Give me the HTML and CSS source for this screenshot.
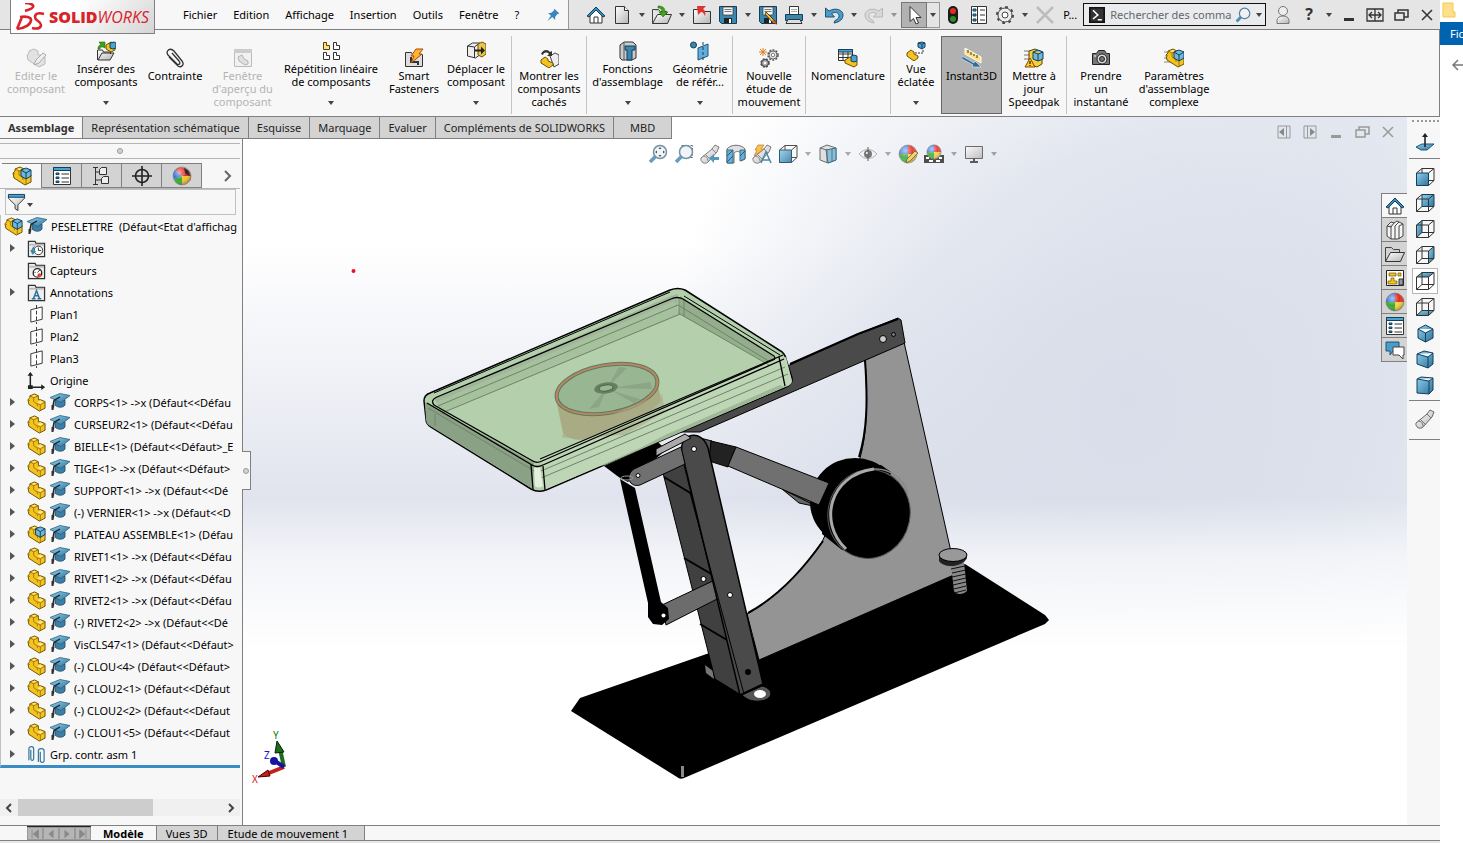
FILE: index.html
```html
<!DOCTYPE html>
<html lang="fr">
<head>
    <meta charset="UTF-8">
    <title>SOLIDWORKS - PESELETTRE</title>
    <link rel="stylesheet" href="styles.css">
</head>
<body>
    <!-- icon set, 20x20 grid -->
    <svg class="sprite" aria-hidden="true">
        <defs>
            <linearGradient id="gBlue" x1="0" y1="0" x2="1" y2="1"><stop offset="0" stop-color="#8fd0ee"/><stop offset="1" stop-color="#2f7299"/></linearGradient>
            <linearGradient id="gGrey" x1="0" y1="0" x2="1" y2="1"><stop offset="0" stop-color="#ffffff"/><stop offset="1" stop-color="#b5b5b5"/></linearGradient>
            <radialGradient id="gShade" cx=".35" cy=".3" r=".8"><stop offset="0" stop-color="#fff" stop-opacity=".6"/><stop offset=".5" stop-color="#fff" stop-opacity="0"/><stop offset="1" stop-color="#000" stop-opacity=".5"/></radialGradient>
        </defs>
        <symbol id="caret" viewBox="0 0 8 8"><path d="M1 2h6L4 6z" fill="#444"/></symbol>
        <symbol id="pin" viewBox="0 0 20 20"><path d="M12 1l7 7-3 1-3 4 0 4-4-4-7 6 5-8-4-4 4 0 4-3z" fill="#3a86bd"/></symbol>
        <symbol id="home" viewBox="0 0 20 20"><path d="M4 9v9h12V9l-6-5z" fill="#fff" stroke="#333"/><path d="M1 11l9-9 9 9-2 1-7-7-7 7z" fill="#3c8ab5" stroke="#123f5c"/><path d="M8 18v-6h4v6" fill="none" stroke="#333"/></symbol>
        <symbol id="new" viewBox="0 0 20 20"><path d="M3.500 1.500h9l4 4v13h-13z" fill="url(#gGrey)" stroke="#333"/><path d="M12.500 1.500v4h4" fill="#fff" stroke="#333"/></symbol>
        <symbol id="folder" viewBox="0 0 20 20"><path d="M.5 3.500h6l2 2h6v4M.5 3.500v14" fill="#ccc" stroke="#444"/><path d="M.5 17.500l5-9h14l-4 9z" fill="url(#gGrey)" stroke="#333"/></symbol>
        <symbol id="open" viewBox="0 0 20 20"><path d="M.5 4.500h6l2 2h6v4M.5 4.500v14" fill="#ccc" stroke="#444"/><path d="M.5 18.500l5-9h14l-4 9z" fill="url(#gGrey)" stroke="#333"/><path d="M6 1c5 0 7 2 7 6h3l-5 5-4-5h3c0-3-1-4-4-4z" fill="#41a31c" stroke="#256b0b" stroke-width=".6"/></symbol>
        <symbol id="publish" viewBox="0 0 20 20"><path d="M1.500 18.500v-14h6l1 2h10v12z" fill="url(#gGrey)" stroke="#333"/><path d="M5 1h9l-3 3c2 1 3 4 2 7-1-2-2-4-4-4l-3 3z" fill="#e0322f"/></symbol>
        <symbol id="save" viewBox="0 0 20 20"><path d="M1.500 1.500h17v17h-15l-2-2z" fill="#3a86ad" stroke="#153f58"/><path d="M5 2h10v8H5z" fill="#f4f4f4" stroke="#333" stroke-width=".7"/><path d="M6.500 4.500h7M6.500 6.500h7" stroke="#777"/><path d="M6 18v-5h8v5z" fill="#222"/><path d="M11 14h2v4h-2z" fill="#fff"/></symbol>
        <symbol id="saveas" viewBox="0 0 20 20"><use href="#save"/><path d="M8 7l9 9 2 3-4-1-8-9z" fill="#f2c230" stroke="#222" stroke-width=".8"/><path d="M15 14l4 5-5-2z" fill="#d9512c"/></symbol>
        <symbol id="print" viewBox="0 0 20 20"><path d="M5.500 9V1.500h9V9" fill="#fff" stroke="#333"/><path d="M1.500 9.500h17v6h-17z" fill="#3a86ad" stroke="#153f58"/><path d="M4 14.500h12l2 4H2z" fill="#ddd" stroke="#333"/><path d="M7 4.500h6M7 6.500h6" stroke="#aaa"/></symbol>
        <symbol id="undo" viewBox="0 0 20 20"><path d="M1.500 3v9h9L7.500 8.500c4-2 7-1 7.500 2 .4 2-1 4-4 5l-1 2.500c6-1 9-4 9-8 0-5-7-8-14-4z" fill="#4b9cc8" stroke="#1c5577"/></symbol>
        <symbol id="redo" viewBox="0 0 20 20"><path d="M18.500 3v9h-9L12.500 8.500c-4-2-7-1-7.500 2-.4 2 1 4 4 5l1 2.500c-6-1-9-4-9-8 0-5 7-8 14-4z" fill="#d8d8d8" stroke="#b8b8b8"/></symbol>
        <symbol id="cursor" viewBox="0 0 20 20"><path d="M6 1.500v15l3.500-3 2.500 5.500 2.500-1-2.500-5.500h5z" fill="#fff" stroke="#333"/></symbol>
        <symbol id="traffic" viewBox="0 0 20 20"><rect x="5" y="1" width="10" height="18" rx="5" fill="#1b1b1b"/><circle cx="10" cy="6" r="3" fill="#e32d1c"/><circle cx="10" cy="14" r="3" fill="#2b8c2b"/></symbol>
        <symbol id="list" viewBox="0 0 20 20"><path d="M2.500 1.500h15v17h-15z" fill="#fff" stroke="#333"/><path d="M8.500 2v16" stroke="#333"/><path d="M4 4h3v2H4zM4 9h3v2H4zM4 14h3v2H4z" fill="#3a9bc9" stroke="#153f58"/><path d="M11 5h5M11 10h5M11 15h5" stroke="#333"/></symbol>
        <symbol id="gear" viewBox="0 0 20 20"><circle cx="10" cy="10" r="8" fill="none" stroke="#444" stroke-width="2" stroke-dasharray="2.700 3.583"/><circle cx="10" cy="10" r="7" fill="#eee" stroke="#444"/><circle cx="10" cy="10" r="3" fill="#fff" stroke="#444"/></symbol>
        <symbol id="cross" viewBox="0 0 20 20"><path d="M2 2l16 16M18 2L2 18" stroke="#bdbdbd" stroke-width="2.500"/></symbol>
        <symbol id="prompt" viewBox="0 0 20 20"><path d="M1 1h18v18H1z" fill="#333" stroke="#111" stroke-width="2"/><path d="M5 4l6 6-6 5M11 16h5" fill="none" stroke="#fff" stroke-width="2"/></symbol>
        <symbol id="lens" viewBox="0 0 20 20"><path d="M2 18l6-6" stroke="#4a8db8" stroke-width="3.500"/><circle cx="12" cy="8" r="6.500" fill="#eef3f6" stroke="#5b7f96" stroke-width="1.500"/></symbol>
        <symbol id="user" viewBox="0 0 20 20"><circle cx="10" cy="6" r="4.500" fill="#eee" stroke="#777"/><path d="M4 18.500v-3c0-6 12-6 12 0v3z" fill="url(#gGrey)" stroke="#777"/></symbol>
        <symbol id="min" viewBox="0 0 20 20"><path d="M5 13h10v3H5z" fill="currentColor"/></symbol>
        <symbol id="fit" viewBox="0 0 20 20"><path d="M2 4h16v12H2zM10 4v12M4 10h12M7 7l-3 3 3 3M13 7l3 3-3 3" fill="none" stroke="currentColor" stroke-width="1.300"/></symbol>
        <symbol id="restore" viewBox="0 0 20 20"><path d="M4 8h9v7H4zM7 8V5h10v7h-4" fill="none" stroke="currentColor" stroke-width="1.500"/></symbol>
        <symbol id="close" viewBox="0 0 20 20"><path d="M5 5l10 10M15 5L5 15" stroke="currentColor" stroke-width="1.500"/></symbol>
        <symbol id="paneL" viewBox="0 0 20 20"><path d="M4 4h12v12H4zM12.500 4v12" fill="none" stroke="#999"/><path d="M10 6v8l-5-4z" fill="#888"/></symbol>
        <symbol id="paneR" viewBox="0 0 20 20"><path d="M4 4h12v12H4zM7.500 4v12" fill="none" stroke="#999"/><path d="M10 6v8l5-4z" fill="#888"/></symbol>

        <symbol id="part" viewBox="0 0 20 20"><path d="M1 7l2-2V3l5-2 4 2v4l2 0 5 2v7l-6 3L2 12z" fill="#f5c31f" stroke="#6f5200"/><path d="M3 3l4 2 5-2M7 5v4l4 3 0 2M1 7l2 1M11 11l3 1.500 5-3M14 12.500V19" fill="none" stroke="#8a6800" stroke-width=".8"/><path d="M5 3l3-1 2 1-3 1zM11 10l3-2 3 1.500-3 2z" fill="#ffe88c"/></symbol>
        <symbol id="asm" viewBox="0 0 20 20"><use href="#part"/><path d="M9 4l5-2 5 2v6l-5 3-5-3z" fill="#6fb8dc" stroke="#123f5c"/><path d="M9 4l5 3 5-3M14 7v6" fill="none" stroke="#123f5c"/></symbol>
        <symbol id="cap" viewBox="0 0 20 20"><path d="M5 8v5c3 3 8 3 10 0V8z" fill="#3d7ea5" stroke="#1c4a66" stroke-width=".8"/><path d="M0 5.500l10-4 10 2-9 7z" fill="url(#gBlue)" stroke="#2a6284" stroke-width=".8"/><path d="M10 5L4 8.500 2.500 16" fill="none" stroke="#222" stroke-width="1.400"/><path d="M1.500 13h3l-1 5h-2z" fill="#333"/></symbol>
        <symbol id="fold" viewBox="0 0 20 20"><path d="M1.500 18.500v-16h7l1 2h9v14z" fill="#eee" stroke="#333" stroke-width="1.300"/><path d="M2 5h16v2H2z" fill="#bbb"/></symbol>
        <symbol id="history" viewBox="0 0 20 20"><use href="#fold"/><circle cx="12" cy="12" r="4.500" fill="#fff" stroke="#333"/><path d="M12 9v3h3" fill="none" stroke="#333"/><path d="M8 8c-3 1-3 4-2 7M4 12l2 4 3-3z" fill="#3a86ad" stroke="#3a86ad"/></symbol>
        <symbol id="sensor" viewBox="0 0 20 20"><use href="#fold"/><circle cx="11" cy="12.500" r="4.500" fill="#fff" stroke="#222" stroke-width="1.400"/><path d="M11 12l3-3M8 12h1" stroke="#222"/><circle cx="13" cy="15" r="2" fill="#e0452c"/></symbol>
        <symbol id="annot" viewBox="0 0 20 20"><use href="#fold"/><path d="M5 16.500h4M11 16.500h4M7 16l3-8 3 8M8 13.500h4" fill="none" stroke="#28729b" stroke-width="1.600"/></symbol>
        <symbol id="plane" viewBox="0 0 20 20"><path d="M4 5l12-3v13L4 18z" fill="#fff" stroke="#333"/><path d="M10 0v20" stroke="#333" stroke-dasharray="4 2"/></symbol>
        <symbol id="origin" viewBox="0 0 20 20"><path d="M3.500 2v15H18" fill="none" stroke="#222" stroke-width="1.600"/><path d="M.5 5l3-4 3 4zM15 14l4 3-4 3zM1 15h5v4H1z" fill="#222"/></symbol>
        <symbol id="mates" viewBox="0 0 20 20"><path d="M2 16V4c0-3 5-3 5 0v10c0 3-3 3-3 0V5M12 18V6c0-3 6-3 6 0v10c0 3-4 3-4 0V7" fill="none" stroke="#39799b" stroke-width="1.300"/></symbol>
        <symbol id="props" viewBox="0 0 20 20"><path d="M1.500 1.500h17v17h-17z" fill="#fff" stroke="#333"/><path d="M1.500 1.500h17v3h-17z" fill="#4ba3cf" stroke="#153f58"/><path d="M4 7h3v1.500H4zM4 11h3v1.500H4zM4 15h3v1.500H4z" fill="#4ba3cf" stroke="#153f58"/><path d="M9.500 8H17M9.500 12H17M9.500 16H17" stroke="#333"/></symbol>
        <symbol id="config" viewBox="0 0 20 20"><path d="M3.500 1v18M1 1.500h5M1 18.500h5M4 6h5M4 14h5" stroke="#333" fill="none"/><path d="M7.500 3.500l2-2h5v7h-7zM9.500 12.500l2-2h5v7h-7z" fill="#eee" stroke="#333"/></symbol>
        <symbol id="target" viewBox="0 0 20 20"><circle cx="10" cy="10" r="6.500" fill="none" stroke="#222" stroke-width="1.600"/><path d="M10 0v20M0 10h20" stroke="#222" stroke-width="1.600"/></symbol>
        <symbol id="ball" viewBox="0 0 20 20"><path d="M10 10V1a9 9 0 0 1 9 9z" fill="#e22b22"/><path d="M10 10h9a9 9 0 0 1-9 9z" fill="#f4d23a"/><path d="M10 10v9a9 9 0 0 1-9-9z" fill="#35a835"/><path d="M10 10H1a9 9 0 0 1 9-9z" fill="#2f6fd6"/><circle cx="10" cy="10" r="9" fill="url(#gShade)" stroke="#777" stroke-width=".6"/></symbol>
        <symbol id="display" viewBox="0 0 20 20"><path d="M10 10L3 4a9 9 0 0 1 13 0z" fill="#e22b22"/><path d="M10 10l6-6a9 9 0 0 1 2 11z" fill="#e22b22"/><path d="M12 2l5 3 1 6-5-4z" fill="#222"/><path d="M10 10l9 0a9 9 0 0 1-9 9z" fill="#f4c22a"/><path d="M10 10v9a9 9 0 0 1-8-6z" fill="#35a835"/><path d="M10 10l-8 3a9 9 0 0 1 1-9z" fill="#2f6fd6"/><circle cx="10" cy="10" r="9" fill="url(#gShade)" stroke="#777" stroke-width=".6"/></symbol>
        <symbol id="filter" viewBox="0 0 20 20"><path d="M1.500 3.500h17v2l-7 7v6l-3-2v-4l-7-7z" fill="url(#gGrey)" stroke="#333"/><path d="M1.500 1.500h17v3h-17z" fill="#4ba3cf" stroke="#153f58"/></symbol>

        <symbol id="edit" viewBox="0 0 20 20"><path d="M1 7l2-2V3l5-2 4 2v4l2 0 5 2v7l-6 3L2 12z" fill="#e2e2e2" stroke="#bbb"/><path d="M8 17l2-5 7-7 3 2-7 8z" fill="#eee" stroke="#aaa"/></symbol>
        <symbol id="insert" viewBox="0 0 20 20"><path d="M1.500 19V9h5l1 2h7v2M2 19l4-7h12l-4 7z" fill="url(#gGrey)" stroke="#333"/><path d="M2 8c0-3 1-4 3-4L3 1h6v6L7 6C5 6 4 6 4 8z" fill="#3ca01b" stroke="#256b0b" stroke-width=".6"/><path d="M10 4l5-3 4 2v6l-4 2-5-3z" fill="#f5c31f" stroke="#6f5200"/><path d="M14 2l4-1 2 1v5l-3 1-3-1z" fill="#4ba3cf" stroke="#123f5c"/></symbol>
        <symbol id="clip" viewBox="0 0 20 20"><path d="M4 9l9 9c3 2 7-1 4-5L9 3C5-1 0 3 3 7l9 9c2 1 4 0 2-3L7 5" fill="none" stroke="#333" stroke-width="1.300"/></symbol>
        <symbol id="preview" viewBox="0 0 20 20"><path d="M1.500 1.500h17v17h-17z" fill="#f1f1f1" stroke="#bbb"/><path d="M1 1h18v4H1z" fill="#ccc"/><path d="M5 9l4-2 2 4 4 2v3l-3 1-6-4z" fill="#e0e0e0" stroke="#b5b5b5"/></symbol>
        <symbol id="pattern" viewBox="0 0 20 20"><path d="M2.500 1.500h3v3h3v4h-6z" fill="#ffe27a" stroke="#5a4300"/><path d="M12.500 1.500h3v3h3v4h-6zM2.500 11.500h3v3h3v4h-6zM12.500 11.500h3v3h3v4h-6z" fill="#fff" stroke="#333"/></symbol>
        <symbol id="smart" viewBox="0 0 20 20"><path d="M1.500 18.500v-14h6l1 2h10v12z" fill="#ddd" stroke="#333"/><path d="M7 9v5h7v3" fill="none" stroke="#333" stroke-width="2"/><path d="M12 1h7l-4 5h3L7 15l3-7H7z" fill="#ffb52e" stroke="#a8480c"/></symbol>
        <symbol id="move" viewBox="0 0 20 20"><path d="M1.500 5l5-3h7v12l-4 3-8-2z" fill="#eee" stroke="#333"/><path d="M1.500 5l7 1 5-4M8.500 6v11" fill="none" stroke="#333"/><path d="M12 3l4-2 4 2v10l-4 3-4-2z" fill="#e9c54a" stroke="#6f5200"/><path d="M9 8.500h6V5.500l4 4-4 4v-3H9z" fill="#222"/></symbol>
        <symbol id="showhid" viewBox="0 0 20 20"><path d="M11 8l5-3 4 2v9l-5 3z" fill="#eee" stroke="#444"/><path d="M2 12l4-3 3 2v2l5 2v2l-4 3-8-5z" fill="#f5c31f" stroke="#6f5200"/><path d="M2 6c2-5 7-5 9-2l2-1v5H8l2-2C8 4 5 4 4 7z" fill="#333"/></symbol>
        <symbol id="feat" viewBox="0 0 20 20"><path d="M2 4l4-3h9l3 3v13l-4 2H4l-2-2z" fill="#ccc" stroke="#333"/><path d="M7 5h10v4h-3v10H9V9H7z" fill="#3a86ad" stroke="#123f5c"/><path d="M6 2v17" stroke="#555"/></symbol>
        <symbol id="geom" viewBox="0 0 20 20"><circle cx="3.500" cy="4" r="3" fill="#3a86ad" stroke="#123f5c"/><path d="M8 7l10-4v12L8 19z" fill="#62addb" stroke="#1c5577"/><path d="M13 1v19" stroke="#123f5c" stroke-dasharray="3 2"/></symbol>
        <symbol id="motion" viewBox="0 0 20 20"><path d="M4 0v8M0 4h8M1 1l6 6M7 1L1 7" stroke="#e07a1c"/><circle cx="14" cy="7" r="5" fill="none" stroke="#555" stroke-width="1.500" stroke-dasharray="2 1.200"/><circle cx="14" cy="7" r="4" fill="#eee" stroke="#666"/><circle cx="6" cy="15" r="4" fill="none" stroke="#444" stroke-width="1.500" stroke-dasharray="2 1.200"/><circle cx="6" cy="15" r="3.500" fill="#aaa" stroke="#444"/><circle cx="6" cy="15" r="1.300" fill="#fff"/><circle cx="14" cy="7" r="1.800" fill="#fff" stroke="#777"/></symbol>
        <symbol id="bom" viewBox="0 0 20 20"><path d="M.5 1.500h14v11H.5zM.5 6h14M.5 9.500h14M5 4v8M10 4v8" fill="#fff" stroke="#333"/><path d="M.5 1.500h14v2.500H.5z" fill="#4ba3cf" stroke="#153f58"/><path d="M7 12l5-3 7 4v4l-3 2-9-4z" fill="#f5c31f" stroke="#6f5200"/><path d="M13 8l3-1 3 1v5l-3 1-3-1z" fill="#4ba3cf" stroke="#123f5c"/></symbol>
        <symbol id="explode" viewBox="0 0 20 20"><path d="M1 12l4-3 3 2v2l4 2v2l-4 3-7-5z" fill="#f5c31f" stroke="#6f5200"/><path d="M12 2l4-1 3 1v4l-3 2-4-2zM12 2l4 1 3-1M16 3v4" fill="#4ba3cf" stroke="#123f5c"/><path d="M9 12h8V8" fill="none" stroke="#333" stroke-dasharray="2 1"/></symbol>
        <symbol id="instant" viewBox="0 0 20 20"><path d="M3 0l16 9v6L3 6z" fill="#ffe27a" stroke="#fff"/><path d="M6 2v3M9 4v3M12 6v2M15 7v3" stroke="#333"/><path d="M0 8l12 7 1-2 6 6-9 0 1-2L0 11z" fill="#2d7198" stroke="#eef" stroke-width=".6"/></symbol>
        <symbol id="speed" viewBox="0 0 20 20"><path d="M0 3h8M0 7h6M0 11h6" stroke="#777"/><path d="M5 3l6-2 7 3v12l-5 3-8-3z" fill="#f7cf3d" stroke="#5a4300"/><path d="M9 4l5-2 5 2v7l-5 2-5-2zM9 4l5 2 5-2M14 6v7" fill="#6fb8dc" stroke="#123f5c"/><path d="M1 19l5-9 5 9z" fill="#ffc81e" stroke="#8a4a00"/><path d="M6 13v3M6 17v1" stroke="#222" stroke-width="1.300"/></symbol>
        <symbol id="camera" viewBox="0 0 20 20"><path d="M1.500 5.500h4l2-3h6l2 3h3v11h-17z" fill="#777" stroke="#222"/><circle cx="11" cy="11" r="5" fill="#ddd" stroke="#222"/><circle cx="11" cy="11" r="2.500" fill="#777" stroke="#222"/><path d="M3 8h2" stroke="#fff"/></symbol>
        <symbol id="large" viewBox="0 0 20 20"><path d="M0 4h6M0 10h6M0 14h9" stroke="#888"/><g transform="translate(1 0)"><use href="#asm"/></g></symbol>

        <symbol id="zfit" viewBox="0 0 20 20"><use href="#lens"/><path d="M10.500 5l1.500-2 1.500 2zM10.500 11l1.500 2 1.500-2zM9 6.500L7 8l2 1.500zM15 6.500L17 8l-2 1.500z" fill="#333"/></symbol>
        <symbol id="zarea" viewBox="0 0 20 20"><path d="M7.500 1.500h11v12h-4" fill="none" stroke="#555" stroke-dasharray="3 1.500"/><use href="#lens"/></symbol>
        <symbol id="scope" viewBox="0 0 20 20"><path d="M1 14l11-9 3-4 4 2-2 5L8 18c-3 3-8 0-7-4z" fill="url(#gGrey)" stroke="#666"/><path d="M12 5l4 4M5 10l6 6M3 12c3 0 5 2 5 5" fill="none" stroke="#777"/></symbol>
        <symbol id="prev" viewBox="0 0 20 20"><use href="#scope"/><path d="M9 14l5-4v3h5v3h-5v3z" fill="#3a86ad"/></symbol>
        <symbol id="section" viewBox="0 0 20 20"><path d="M1 5c4-5 14-5 18 0v10l-4 2V9c-2-2-5-2-7 0v10H1z" fill="#ddd" stroke="#555"/><path d="M1 6h6v13H1zM14 6h5v9l-5 2z" fill="#4ba3cf" stroke="#1c5577"/><path d="M1 12l6-6M1 18l6-6M14 12l5-5" stroke="#123f5c"/></symbol>
        <symbol id="dyn" viewBox="0 0 20 20"><use href="#scope"/><path d="M6 1h6L9 5h3L2 12l3-6H3z" fill="#ffb52e" stroke="#a8680c" stroke-width=".7"/><path d="M9 19l5-11 5 11M11 16h6" fill="none" stroke="#2d7198" stroke-width="1.500"/></symbol>
        <symbol id="cubeFront" viewBox="0 0 20 20"><path d="M7 1.500h12v12H7zM1.500 6L7 1.500M13.500 6L19 1.500M13.500 18.500L19 13.500M1.500 18.500L7 13.500" fill="none" stroke="#333"/><path d="M1.500 6h12v12.500h-12z" fill="url(#gBlue)" stroke="#123f5c"/></symbol>
        <symbol id="cubeBack" viewBox="0 0 20 20"><path d="M7 1.500h12v12H7z" fill="url(#gBlue)" stroke="#123f5c"/><path d="M1.500 6h12v12.500h-12zM1.500 6L7 1.500M13.500 6L19 1.500M13.500 18.500L19 13.500M1.500 18.500L7 13.500" fill="none" stroke="#333"/></symbol>
        <symbol id="cubeLeft" viewBox="0 0 20 20"><path d="M1.500 6L7 1.500v12l-5.500 5z" fill="url(#gBlue)"/><path d="M7 1.500h12v12H7zM1.500 6h12v12.500h-12zM1.500 6L7 1.500M13.500 6L19 1.500M13.500 18.500L19 13.500M1.500 18.500L7 13.500" fill="none" stroke="#333"/></symbol>
        <symbol id="cubeRight" viewBox="0 0 20 20"><path d="M13.500 6L19 1.500v12l-5.500 5z" fill="url(#gBlue)"/><path d="M7 1.500h12v12H7zM1.500 6h12v12.500h-12zM1.500 6L7 1.500M13.500 6L19 1.500M13.500 18.500L19 13.500M1.500 18.500L7 13.500" fill="none" stroke="#333"/></symbol>
        <symbol id="cubeTop" viewBox="0 0 20 20"><path d="M1.500 6L7 1.500h12L13.500 6z" fill="url(#gBlue)"/><path d="M7 1.500h12v12H7zM1.500 6h12v12.500h-12zM1.500 6L7 1.500M13.500 6L19 1.500M13.500 18.500L19 13.500M1.500 18.500L7 13.500" fill="none" stroke="#333"/></symbol>
        <symbol id="cubeBottom" viewBox="0 0 20 20"><path d="M1.500 18.500l5.500-5h12l-5.500 5z" fill="url(#gBlue)"/><path d="M7 1.500h12v12H7zM1.500 6h12v12.500h-12zM1.500 6L7 1.500M13.500 6L19 1.500M13.500 18.500L19 13.500M1.500 18.500L7 13.500" fill="none" stroke="#333"/></symbol>
        <symbol id="iso" viewBox="0 0 20 20"><path d="M3 6l7.500-4L18 6v9l-7.500 4L3 15zM3 6l7.500 4L18 6M10.500 10v9" fill="url(#gBlue)" stroke="#123f5c"/></symbol>
        <symbol id="tri" viewBox="0 0 20 20"><path d="M2 5l7-3 9 2v11l-5 4-11-4zM2 5l11 3 5-4M13 8v11" fill="url(#gBlue)" stroke="#123f5c"/></symbol>
        <symbol id="di" viewBox="0 0 20 20"><path d="M2 4l4-2 12 1v12l-4 4-12-1zM2 4l12 2 4-3M14 6v13" fill="url(#gBlue)" stroke="#123f5c"/></symbol>
        <symbol id="style" viewBox="0 0 20 20"><path d="M2 4l7-3 9 3v12l-8 3-8-3z" fill="#ddd" stroke="#555"/><path d="M8 6l10-2v12l-8 3z" fill="#6fb8dc" stroke="#1c5577"/><path d="M2 4l7 2v13M14 5v12" fill="none" stroke="#555"/></symbol>
        <symbol id="eye" viewBox="0 0 20 20"><path d="M1 10c5-6 13-6 18 0-5 6-13 6-18 0z" fill="#f3f3f3" stroke="#aaa"/><circle cx="10" cy="10" r="4" fill="#666"/><path d="M10 3v14" stroke="#444"/><circle cx="9" cy="9" r="1" fill="#fff"/></symbol>
        <symbol id="appear" viewBox="0 0 20 20"><use href="#ball"/><path d="M8 19l1-4 8-8 3 2-8 8z" fill="#f5cf5a" stroke="#5a4300" stroke-width=".8"/></symbol>
        <symbol id="scene" viewBox="0 0 20 20"><path d="M0 11h20v8H0z" fill="#333"/><path d="M2 13h3v2H2zM15 13h3v2h-3zM5 16h4v2H5zM12 16h4v2h-4z" fill="#fff"/><g transform="translate(2 0) scale(.8)"><use href="#ball"/></g></symbol>
        <symbol id="screen" viewBox="0 0 20 20"><path d="M1.500 2.500h17v12h-17z" fill="url(#gGrey)" stroke="#555"/><path d="M10 14v4M6 18h8" stroke="#444" stroke-width="2"/></symbol>
        <symbol id="normal" viewBox="0 0 20 20"><path d="M1 14l6-3h12l-7 6H6z" fill="url(#gBlue)" stroke="#1c5577"/><path d="M10 14V3" stroke="#222" stroke-width="1.600"/><path d="M10 0l3 4H7z" fill="#222"/></symbol>
        <symbol id="books" viewBox="0 0 20 20"><path d="M2 6l4-4 3 1 3-2 2 1 4 2v12l-5 3H6l-4-3zM6 6v13M10 6v13M14 6v13M2 6l4 1 3-4M10 6l4-4M14 6l4-2" fill="#f4f4f4" stroke="#444"/></symbol>
        <symbol id="palette" viewBox="0 0 20 20"><path d="M1.500 2.500h17v15h-17z" fill="#fff" stroke="#222"/><path d="M4 5h7v3H4zM13 5h3v3h-3zM6 10h3v3h3v3H3v-3h3z" fill="#f5c31f" stroke="#6f5200" stroke-width=".7"/><path d="M14 11h4v6h-4z" fill="#999" stroke="#333"/></symbol>
        <symbol id="forum" viewBox="0 0 20 20"><path d="M1 2h13v9H8l-3 4v-4H1z" fill="#4b9cc8" stroke="#1c5577"/><path d="M8 7h11v8h-1v4l-4-4H8z" fill="#fff" stroke="#444"/></symbol>
    </svg>

    <div class="desktop">
        <div class="app">
            <header class="titlebar">
                <div class="brand">
                    <svg class="brand-mark" viewBox="0 0 30 28" aria-hidden="true"><path d="M9 0c6 0 9 2 8 4-1 2-5 3-8 4M1 26l5-12M1 26c9-1 14-5 14-9 0-3-5-4-11-3M28 11c-6-2-9 0-9 3 0 4 6 4 6 8 0 4-5 4-9 3" fill="none" stroke="#d8232a" stroke-width="2.600"/></svg>
                    <span class="brand-name"><b>SOLID</b><i>WORKS</i></span>
                </div>
                <nav class="menu">
                    <button>Fichier</button><button>Edition</button><button>Affichage</button><button>Insertion</button><button>Outils</button><button>Fenêtre</button><button>?</button>
                    <button class="pin" aria-label="Epingler"><svg><use href="#pin"/></svg></button>
                </nav>
                <div class="quick">
                    <button class="tool"><svg><use href="#home"/></svg></button>
                    <button class="tool"><svg><use href="#new"/></svg></button><button class="drop"><svg><use href="#caret"/></svg></button>
                    <button class="tool"><svg><use href="#open"/></svg></button><button class="drop"><svg><use href="#caret"/></svg></button>
                    <button class="tool"><svg><use href="#publish"/></svg></button>
                    <button class="tool"><svg><use href="#save"/></svg></button><button class="drop"><svg><use href="#caret"/></svg></button>
                    <button class="tool"><svg><use href="#saveas"/></svg></button>
                    <button class="tool"><svg><use href="#print"/></svg></button><button class="drop"><svg><use href="#caret"/></svg></button>
                    <button class="tool"><svg><use href="#undo"/></svg></button><button class="drop"><svg><use href="#caret"/></svg></button>
                    <button class="tool"><svg><use href="#redo"/></svg></button><button class="drop off"><svg><use href="#caret"/></svg></button>
                    <button class="tool pressed"><svg><use href="#cursor"/></svg></button><button class="drop framed"><svg><use href="#caret"/></svg></button>
                    <button class="tool"><svg><use href="#traffic"/></svg></button>
                    <button class="tool"><svg><use href="#list"/></svg></button>
                    <button class="tool"><svg><use href="#gear"/></svg></button><button class="drop"><svg><use href="#caret"/></svg></button>
                    <button class="tool"><svg><use href="#cross"/></svg></button>
                </div>
                <span class="doc-name">P...</span>
                <div class="search">
                    <svg><use href="#prompt"/></svg>
                    <input type="text" aria-label="Rechercher des commandes" placeholder="Rechercher des comma">
                    <button class="tool"><svg><use href="#lens"/></svg></button><button class="drop"><svg><use href="#caret"/></svg></button>
                </div>
                <div class="window-tools">
                    <button class="tool"><svg><use href="#user"/></svg></button>
                    <button class="tool help">?</button><button class="drop"><svg><use href="#caret"/></svg></button>
                    <button class="tool"><svg><use href="#min"/></svg></button>
                    <button class="tool"><svg><use href="#fit"/></svg></button>
                    <button class="tool"><svg><use href="#restore"/></svg></button>
                    <button class="tool"><svg><use href="#close"/></svg></button>
                </div>
            </header>

            <div class="ribbon">
                <button disabled><svg><use href="#edit"/></svg><span>Editer le<br>composant</span></button>
                <button class="has-menu"><svg><use href="#insert"/></svg><span>Insérer des<br>composants</span><svg class="more"><use href="#caret"/></svg></button>
                <button><svg><use href="#clip"/></svg><span>Contrainte</span></button>
                <button disabled><svg><use href="#preview"/></svg><span>Fenêtre<br>d'aperçu du<br>composant</span></button>
                <button class="has-menu"><svg><use href="#pattern"/></svg><span>Répétition linéaire<br>de composants</span><svg class="more"><use href="#caret"/></svg></button>
                <button><svg><use href="#smart"/></svg><span>Smart<br>Fasteners</span></button>
                <button class="has-menu group-end"><svg><use href="#move"/></svg><span>Déplacer le<br>composant</span><svg class="more"><use href="#caret"/></svg></button>
                <button class="group-end"><svg><use href="#showhid"/></svg><span>Montrer les<br>composants<br>cachés</span></button>
                <button class="has-menu"><svg><use href="#feat"/></svg><span>Fonctions<br>d'assemblage</span><svg class="more"><use href="#caret"/></svg></button>
                <button class="has-menu group-end"><svg><use href="#geom"/></svg><span>Géométrie<br>de référ...</span><svg class="more"><use href="#caret"/></svg></button>
                <button class="group-end"><svg><use href="#motion"/></svg><span>Nouvelle<br>étude de<br>mouvement</span></button>
                <button class="group-end"><svg><use href="#bom"/></svg><span>Nomenclature</span></button>
                <button class="has-menu"><svg><use href="#explode"/></svg><span>Vue<br>éclatée</span><svg class="more"><use href="#caret"/></svg></button>
                <button class="pressed"><svg><use href="#instant"/></svg><span>Instant3D</span></button>
                <button class="group-end"><svg><use href="#speed"/></svg><span>Mettre à<br>jour<br>Speedpak</span></button>
                <button><svg><use href="#camera"/></svg><span>Prendre<br>un<br>instantané</span></button>
                <button><svg><use href="#large"/></svg><span>Paramètres<br>d'assemblage<br>complexe</span></button>
            </div>

            <main class="workspace">
                <nav class="tabs">
                    <button class="active">Assemblage</button><button>Représentation schématique</button><button>Esquisse</button><button>Marquage</button><button>Evaluer</button><button>Compléments de SOLIDWORKS</button><button>MBD</button>
                </nav>

                <aside class="panel">
                    <div class="grip"><span></span></div>
                    <div class="panel-tabs">
                        <button class="active"><svg><use href="#asm"/></svg></button>
                        <button><svg><use href="#props"/></svg></button>
                        <button><svg><use href="#config"/></svg></button>
                        <button><svg><use href="#target"/></svg></button>
                        <button><svg><use href="#display"/></svg></button>
                        <button class="next" aria-label="Suivant"><svg viewBox="0 0 10 12"><path d="M2 1l5 5-5 5" fill="none" stroke="#666" stroke-width="2"/></svg></button>
                    </div>
                    <div class="filter">
                        <svg><use href="#filter"/></svg><svg class="small"><use href="#caret"/></svg>
                        <input type="text" aria-label="Filtrer l'arbre">
                    </div>
                    <ul class="tree">
                        <li class="root"><svg><use href="#asm"/></svg><svg class="cap"><use href="#cap"/></svg>PESELETTRE&nbsp; (Défaut&lt;Etat d'affichag</li>
                        <li class="open"><svg><use href="#history"/></svg>Historique</li>
                        <li><svg><use href="#sensor"/></svg>Capteurs</li>
                        <li class="open"><svg><use href="#annot"/></svg>Annotations</li>
                        <li><svg><use href="#plane"/></svg>Plan1</li>
                        <li><svg><use href="#plane"/></svg>Plan2</li>
                        <li><svg><use href="#plane"/></svg>Plan3</li>
                        <li><svg><use href="#origin"/></svg>Origine</li>
                        <li class="open"><svg><use href="#part"/></svg><svg class="cap"><use href="#cap"/></svg>CORPS&lt;1&gt; -&gt;x (Défaut&lt;&lt;Défau</li>
                        <li class="open"><svg><use href="#part"/></svg><svg class="cap"><use href="#cap"/></svg>CURSEUR2&lt;1&gt; (Défaut&lt;&lt;Défau</li>
                        <li class="open"><svg><use href="#part"/></svg><svg class="cap"><use href="#cap"/></svg>BIELLE&lt;1&gt; (Défaut&lt;&lt;Défaut&gt;_E</li>
                        <li class="open"><svg><use href="#part"/></svg><svg class="cap"><use href="#cap"/></svg>TIGE&lt;1&gt; -&gt;x (Défaut&lt;&lt;Défaut&gt;</li>
                        <li class="open"><svg><use href="#part"/></svg><svg class="cap"><use href="#cap"/></svg>SUPPORT&lt;1&gt; -&gt;x (Défaut&lt;&lt;Dé</li>
                        <li class="open"><svg><use href="#part"/></svg><svg class="cap"><use href="#cap"/></svg>(-) VERNIER&lt;1&gt; -&gt;x (Défaut&lt;&lt;D</li>
                        <li class="open"><svg><use href="#asm"/></svg><svg class="cap"><use href="#cap"/></svg>PLATEAU ASSEMBLE&lt;1&gt; (Défau</li>
                        <li class="open"><svg><use href="#part"/></svg><svg class="cap"><use href="#cap"/></svg>RIVET1&lt;1&gt; -&gt;x (Défaut&lt;&lt;Défau</li>
                        <li class="open"><svg><use href="#part"/></svg><svg class="cap"><use href="#cap"/></svg>RIVET1&lt;2&gt; -&gt;x (Défaut&lt;&lt;Défau</li>
                        <li class="open"><svg><use href="#part"/></svg><svg class="cap"><use href="#cap"/></svg>RIVET2&lt;1&gt; -&gt;x (Défaut&lt;&lt;Défau</li>
                        <li class="open"><svg><use href="#part"/></svg><svg class="cap"><use href="#cap"/></svg>(-) RIVET2&lt;2&gt; -&gt;x (Défaut&lt;&lt;Dé</li>
                        <li class="open"><svg><use href="#part"/></svg><svg class="cap"><use href="#cap"/></svg>VisCLS47&lt;1&gt; (Défaut&lt;&lt;Défaut&gt;</li>
                        <li class="open"><svg><use href="#part"/></svg><svg class="cap"><use href="#cap"/></svg>(-) CLOU&lt;4&gt; (Défaut&lt;&lt;Défaut&gt;</li>
                        <li class="open"><svg><use href="#part"/></svg><svg class="cap"><use href="#cap"/></svg>(-) CLOU2&lt;1&gt; (Défaut&lt;&lt;Défaut</li>
                        <li class="open"><svg><use href="#part"/></svg><svg class="cap"><use href="#cap"/></svg>(-) CLOU2&lt;2&gt; (Défaut&lt;&lt;Défaut</li>
                        <li class="open"><svg><use href="#part"/></svg><svg class="cap"><use href="#cap"/></svg>(-) CLOU1&lt;5&gt; (Défaut&lt;&lt;Défaut</li>
                        <li class="open"><svg><use href="#mates"/></svg>Grp. contr. asm 1</li>
                    </ul>
                    <div class="scrollbar">
                        <button aria-label="Gauche"><svg viewBox="0 0 10 12"><path d="M7 2L3 6l4 4" fill="none" stroke="#444" stroke-width="2"/></svg></button>
                        <div class="track"><div class="thumb"></div></div>
                        <button aria-label="Droite"><svg viewBox="0 0 10 12"><path d="M3 2l4 4-4 4" fill="none" stroke="#444" stroke-width="2"/></svg></button>
                    </div>
                    <button class="splitter" aria-label="Réduire le panneau"><span></span></button>
                </aside>

                <section class="viewport">
                    <svg class="model" viewBox="243 117 1164 708">
                        <circle cx="353.500" cy="271" r="2" fill="#e8112d"/>
                        <!-- base plate -->
                        <path d="M571 711l9-13 385-134 80 51 4 5-4 4-361 154q-4 2-7-1z"/>
                        <path d="M681 766h3v11h-3z" fill="#888"/>
                        <!-- side plate -->
                        <path d="M865 360l39-18 52 232-197 86-12-46c31-17 54-42 75-72l38-84c7-25 8-55 5-98z" fill="#949494" stroke="#000"/>
                        <path d="M748 613c31-17 54-42 75-72M859 457c8-25 9-55 6-97" fill="none" stroke="#000" stroke-width="2"/>
                        <!-- beam -->
                        <path d="M770 374l88-40 40-16 3 2 4 23-205 89h-20z" fill="#4a4a4a" stroke="#000"/>
                        <path d="M790 364l68-30 40-15" fill="none" stroke="#000" stroke-width="2"/>
                        <circle cx="883" cy="339" r="3.500" fill="#ccc" stroke="#000"/><circle cx="893.500" cy="334.500" r="2" fill="#777" stroke="#000"/>
                        <!-- counterweight arm -->
                        <path d="M782 489l29 8 8 5-6 4-14-3z" fill="#666" stroke="#000"/><path d="M786 491l24 12" stroke="#000"/>
                        <path d="M700 438l12 3-3 20-8-2z" fill="#555" stroke="#000"/>
                        <path d="M711 441l25 6-8 20-19-6z" fill="#222" stroke="#000"/>
                        <ellipse cx="855" cy="502" rx="45" ry="44"/>
                        <path d="M826 471l55-6 10 7-16 80-33-2-20-16z"/>
                        <path d="M736 447l93 36-10 22-91-39z" fill="#707070" stroke="#000"/>
                        <ellipse cx="869" cy="514" rx="41" ry="44.500" transform="rotate(12 869 514)" stroke="#555"/>
                        <path d="M846 549c-28-26-17-74 28-80" fill="none" stroke="#aaa" stroke-width="3"/>
                        <path d="M874 469c15-1 29 9 34 24" fill="none" stroke="#888" stroke-width="1.500"/>
                        <!-- post -->
                        <path d="M705 665l8 6 1 8-8-6z" fill="#777"/>
                        <path d="M663 473l20-12 58 234-26-16z" fill="#404040" stroke="#000"/>
                        <path d="M664 477l28 17M684 558l29 17M700 624l27 16" stroke="#000" stroke-width="2"/>
                        <path d="M662 605l55-26 4 18-55 28z" fill="#6c6c6c" stroke="#000"/>
                        <path d="M742 695l20-9c13 3 11 14-2 15-8 1-14-2-18-6z" fill="#555" stroke="#000"/>
                        <ellipse cx="760" cy="694" rx="6" ry="4" fill="#fff"/>
                        <path d="M682 453c-4-20 20-25 26-5l55 236-23 11z" fill="#4a4a4a" stroke="#000" stroke-width="1.500"/>
                        <path d="M690 493l54 201" stroke="#000"/>
                        <g fill="#fff" stroke="#000"><circle cx="694" cy="449" r="2.500"/><circle cx="703.500" cy="579" r="2.500"/><circle cx="730" cy="595" r="2.500"/></g>
                        <circle cx="748" cy="672" r="3"/>
                        <!-- rod and pointer head -->
                        <path d="M620 479l15 9 26 114 7 6 1 11-7 6-9-1-5-7v-14z"/>
                        <circle cx="663.500" cy="615.500" r="2" fill="#fff"/>
                        <path d="M604 466l54-24 8 8-26 22-12 10-8-4z"/>
                        <path d="M656 449l29-15 6 4-35 18z" fill="#aaa" stroke="#000"/>
                        <path d="M634 469l47-22 4 17-45 21c-10 3-16-9-6-16z" fill="#707070" stroke="#000"/>
                        <circle cx="638" cy="475.500" r="2" fill="#fff" stroke="#000"/>
                        <ellipse cx="627" cy="478" rx="6" ry="2" fill="none" stroke="#999"/>
                        <!-- screw -->
                        <path d="M951 565l13-3 3 29c-4 4-11 4-13 0z" fill="#888"/>
                        <path d="M951 569l14-3M952 573l14-3M952 577l14-3M953 581l13-3M953 585l13-3M954 589l12-3M954 593l12-3" stroke="#111"/>
                        <path d="M939 556v5c5 8 24 6 28-3v-5z" fill="#222"/>
                        <ellipse cx="953" cy="555" rx="14" ry="6.500" fill="#999" stroke="#000"/>
                        <!-- tray -->
                        <g stroke-linejoin="round">
                            <path d="M424 401q0-6 6-8l240-103q8-3 15 0l94 60q6 3 7 9l6 19q1 6-6 9L546 490q-8 3-15-1L431 427q-5-3-5-8z" fill="#b3cfab" stroke="#000" stroke-width="1.500"/>
                            <path d="M434 398l237-102 7-2-1 14-235 104z" fill="#a0b59a"/>
                            <path d="M436 402l238-101 6 14-238 98z" fill="#a6c19d"/>
                            <path d="M680 296l94 61-4 8-91-51z" fill="#94ad8c"/>
                            <path d="M425 402l109 61-1 26-103-63q-4-2-4-7z" fill="#8ba186"/>
                            <path d="M542 462l244-105 6 24q0 4-7 6L544 490z" fill="#bed6b6"/>
                            <path d="M600 466l40-18 25-13 115-50 5 2-180 78z" fill="#9fb896"/>
                            <!-- drum seen through the tray floor -->
                            <path d="M556 399l7 34c8 14 60 8 98-32l-4-22z" fill="#a9ab83"/>
                            <ellipse cx="607" cy="389" rx="51" ry="24" transform="rotate(-10 607 389)" fill="#98b692" stroke="#5f7a5a" stroke-width="4"/>
                            <ellipse cx="607" cy="389" rx="51" ry="24" transform="rotate(-10 607 389)" fill="none" stroke="#b98566" stroke-width="2"/>
                            <path d="M607 388l-18 21 10-2zM607 388l20-20-8-1zM612 388l40 1-2-7zM610 390l24 13 6-4z" fill="#8aa685"/>
                            <ellipse cx="606" cy="388" rx="12" ry="5.500" transform="rotate(-8 606 388)" fill="#65805f"/><ellipse cx="606" cy="388" rx="7" ry="3" transform="rotate(-8 606 388)" fill="#98b692" stroke="#4c6347"/>
                            <path d="M562 435l100-41 3 18-40 23-62 3z" fill="#a9ab83" opacity=".6"/>
                            <path d="M540 460l242-102" stroke="#bed6b6" stroke-width="4"/>
                            <g fill="none" stroke="#6d8567">
                                <path d="M442 413l238-99 89 51M438 406l240-101 92 57M679 298v16M684 300v16M541 471l244-104M541 478l247-104M428 408l108 64M435 414v12"/>
                            </g>
                            <g fill="none" stroke="#000" stroke-width="1.300">
                                <path d="M434 405q-4-5 3-8l234-98q6-3 12 0l91 57q2 3-1 4L542 461q-6 3-11-1z"/>
                                <path d="M427 403l105 62q5 3 11 0l241-106M540 459l243-104M531 465l2 24M543 466l2 24M779 357l6 29"/>
                                <path d="M434 393l236-101M684 296l96 59" stroke-width="1"/>
                            </g>
                            <path d="M534 468h6l3 18q-4 3-8 0z" fill="#e4f0dd"/>
                        </g>
                        <!-- axis triad -->
                        <path d="M284 767l-20 8" stroke="#c81e1e" stroke-width="4"/><path d="M258 777l10-7 2 6z" fill="#c81e1e" stroke="#400"/>
                        <path d="M284 767l-4-18" stroke="#1b6e1b" stroke-width="4"/><path d="M277 741l7 11-9 1z" fill="#1b6e1b" stroke="#020"/>
                        <path d="M284 767l-9-6" stroke="#1414a0" stroke-width="4"/><circle cx="274" cy="761" r="4" fill="#1414a0"/>
                        <text class="axis" x="252" y="783" fill="#e01010">X</text><text class="axis" x="273" y="739" fill="#108010">Y</text><text class="axis" x="264" y="759" fill="#1010e0">Z</text>
                    </svg>

                    <div class="heads-up">
                        <button class="tool"><svg><use href="#zfit"/></svg></button>
                        <button class="tool"><svg><use href="#zarea"/></svg></button>
                        <button class="tool"><svg><use href="#prev"/></svg></button>
                        <button class="tool"><svg><use href="#section"/></svg></button>
                        <button class="tool"><svg><use href="#dyn"/></svg></button>
                        <button class="tool"><svg><use href="#cubeFront"/></svg></button><button class="drop off"><svg><use href="#caret"/></svg></button>
                        <button class="tool"><svg><use href="#style"/></svg></button><button class="drop off"><svg><use href="#caret"/></svg></button>
                        <button class="tool"><svg><use href="#eye"/></svg></button><button class="drop off"><svg><use href="#caret"/></svg></button>
                        <button class="tool"><svg><use href="#appear"/></svg></button>
                        <button class="tool"><svg><use href="#scene"/></svg></button><button class="drop off"><svg><use href="#caret"/></svg></button>
                        <button class="tool"><svg><use href="#screen"/></svg></button><button class="drop off"><svg><use href="#caret"/></svg></button>
                    </div>

                    <div class="doc-tools">
                        <button class="tool"><svg><use href="#paneL"/></svg></button>
                        <button class="tool"><svg><use href="#paneR"/></svg></button>
                        <button class="tool"><svg><use href="#min"/></svg></button>
                        <button class="tool"><svg><use href="#restore"/></svg></button>
                        <button class="tool"><svg><use href="#close"/></svg></button>
                    </div>

                    <div class="task-pane">
                        <button class="active"><svg><use href="#home"/></svg></button>
                        <button><svg><use href="#books"/></svg></button>
                        <button><svg><use href="#folder"/></svg></button>
                        <button><svg><use href="#palette"/></svg></button>
                        <button><svg><use href="#ball"/></svg></button>
                        <button><svg><use href="#props"/></svg></button>
                        <button><svg><use href="#forum"/></svg></button>
                    </div>
                </section>

                <div class="views">
                    <div class="views-group">
                        <button><svg><use href="#normal"/></svg></button>
                    </div>
                    <div class="views-group">
                        <button><svg><use href="#cubeFront"/></svg></button>
                        <button><svg><use href="#cubeBack"/></svg></button>
                        <button><svg><use href="#cubeLeft"/></svg></button>
                        <button><svg><use href="#cubeRight"/></svg></button>
                        <button class="active"><svg><use href="#cubeTop"/></svg></button>
                        <button><svg><use href="#cubeBottom"/></svg></button>
                        <button><svg><use href="#iso"/></svg></button>
                        <button><svg><use href="#tri"/></svg></button>
                        <button><svg><use href="#di"/></svg></button>
                    </div>
                    <div class="views-group last">
                        <button><svg><use href="#scope"/></svg></button>
                    </div>
                </div>
            </main>

            <footer class="sheets">
                <div class="sheet-nav">
                    <button aria-label="Premier"><svg viewBox="0 0 12 12"><path d="M2.500 1v10M10 1v10L4 6z" fill="#888" stroke="#888"/></svg></button>
                    <button aria-label="Précédent"><svg viewBox="0 0 12 12"><path d="M9 1v10L3 6z" fill="#888"/></svg></button>
                    <button aria-label="Suivant"><svg viewBox="0 0 12 12"><path d="M3 1v10l6-5z" fill="#888"/></svg></button>
                    <button aria-label="Dernier"><svg viewBox="0 0 12 12"><path d="M9.500 1v10M2 1v10l6-5z" fill="#888" stroke="#888"/></svg></button>
                </div>
                <button class="sheet active">Modèle</button><button class="sheet">Vues 3D</button><button class="sheet">Etude de mouvement 1</button>
            </footer>
        </div>

        <!-- file explorer window behind the app -->
        <div class="explorer">
            <div class="explorer-title"><svg viewBox="0 0 14 16"><path d="M1 1h10v9h2v5H1z" fill="#ffe08a" stroke="#f2c94c"/></svg></div>
            <div class="explorer-menu">Fic</div>
            <button class="back" aria-label="Retour"><svg viewBox="0 0 12 12"><path d="M12 6H1M6 1L1 6l5 5" fill="none" stroke="#777" stroke-width="1.500"/></svg></button>
        </div>
    </div>
</body>
</html>
```
FILE: styles.css
```css
* {
    box-sizing: border-box;
}
body {
    margin: 0;
    font-family: "Noto Sans", "Open Sans", sans-serif;
    font-size: 11px;
    line-height: 13px;
    color: #000;
}
button, input {
    font: inherit;
    color: inherit;
    background: none;
    border: 0;
    margin: 0;
    padding: 0;
    white-space: nowrap;
}
svg {
    display: block;
    flex: none;
    width: 20px;
    height: 20px;
}
.sprite {
    position: absolute;
    width: 0;
    height: 0;
}
.desktop {
    display: flex;
    height: 100vh;
    overflow: hidden;
    background: #fff;
}
.app {
    flex: 1;
    min-width: 0;
    display: flex;
    flex-direction: column;
    background: #f7f7f7;
}

/* shared small buttons */
.tool, .drop {
    display: flex;
    align-items: center;
    justify-content: center;
    width: 26px;
    height: 26px;
}
.drop {
    width: 14px;
}
.drop svg {
    width: 8px;
    height: 8px;
}
.off {
    opacity: 0.5;
}

/* title bar */
.titlebar {
    position: relative;
    display: flex;
    align-items: center;
    height: 30px;
    background: #e5e5e5;
    border-bottom: 1px solid #808080;
}
.brand {
    position: absolute;
    left: 10px;
    top: -1px;
    z-index: 2;
    display: flex;
    align-items: center;
    gap: 3px;
    width: 145px;
    height: 35px;
    padding-left: 5px;
    background: linear-gradient(135deg, #fff 40%, #d5d5d5);
    border: 1px solid #808080;
}
.brand-mark {
    width: 30px;
    height: 28px;
}
.brand-name {
    color: #d8232a;
    font-family: "Open Sans", sans-serif;
    font-size: 16px;
    line-height: 20px;
}
.brand-name b {
    font-weight: 800;
}
.menu {
    display: flex;
    align-items: center;
    height: 29px;
    margin-left: 10px;
    padding-left: 165px;
    background: #f7f7f7;
    border-right: 1px solid #999;
}
.menu button {
    padding: 0 8px;
}
.menu .pin {
    margin-left: 11px;
}
.menu .pin svg {
    width: 14px;
    height: 14px;
}
.quick {
    display: flex;
    margin-left: 14px;
}
.quick .pressed {
    background: #b2b2b2;
    border: 1px solid #777;
}
.quick .framed {
    width: 13px;
    border: 1px solid #999;
    border-left: 0;
}
.doc-name {
    margin-left: 5px;
}
.search {
    flex: 1;
    min-width: 0;
    display: flex;
    align-items: center;
    height: 23px;
    margin-left: 6px;
    padding-left: 5px;
    background: #e9ebef;
    border: 1px solid #111;
}
.search svg {
    width: 16px;
    height: 16px;
}
.search .drop {
    width: 12px;
}
.search .drop svg {
    width: 8px;
    height: 8px;
}
.search input {
    flex: 1;
    min-width: 0;
    padding-left: 5px;
}
.search input::placeholder {
    color: #666;
    opacity: 1;
}
.search .tool {
    width: 20px;
}
.window-tools {
    display: flex;
    color: #333;
    padding-left: 4px;
}
.window-tools .help {
    font-size: 16px;
    font-weight: bold;
}

/* command ribbon */
.ribbon {
    display: grid;
    grid-template-columns: 72px 68px 70px 65px 112px 54px 71px 75px 81px 65px 73px 85px 50px 61px 65px 68px 78px;
    height: 87px;
    padding: 6px 0 2px;
    border-right: 1px solid #808080;
    border-bottom: 1px solid #808080;
}
.ribbon button {
    display: flex;
    flex-direction: column;
    align-items: center;
    justify-content: flex-start;
    gap: 1px;
    padding-top: 12px;
    text-align: center;
}
.ribbon .has-menu {
    padding-top: 5px;
}
.ribbon .more {
    width: 8px;
    height: 8px;
    margin-top: 10px;
}
.ribbon button:disabled {
    color: #b4b4b4;
}
.ribbon .group-end {
    border-right: 1px solid #c4c4c4;
}
.ribbon .pressed {
    background: #b2b2b2;
    border: 1px solid #666;
    padding-top: 11px;
}

/* workspace: the tab strip lies on the same grid as the viewport */
.workspace {
    flex: 1;
    min-height: 0;
    display: grid;
    grid-template-columns: 243px 1fr 33px;
    grid-template-rows: 22px minmax(0, 1fr);
}
.tabs {
    grid-area: 1 / 1 / 2 / 3;
    justify-self: start;
    z-index: 1;
    display: flex;
}
.tabs button {
    padding: 0 8px;
    background: #d3d3d3;
    color: #222;
    border-right: 1px solid #808080;
    border-bottom: 1px solid #808080;
}
.tabs button:last-child {
    padding: 0 16px;
}
.tabs .active {
    background: #f7f7f7;
    color: #333;
    font-weight: bold;
}

/* feature manager */
.panel {
    position: relative;
    grid-area: 2 / 1 / 3 / 2;
    display: flex;
    flex-direction: column;
    padding-right: 2px;
    border-right: 1px solid #808080;
}
.grip {
    display: flex;
    align-items: center;
    justify-content: center;
    height: 16px;
    margin: 4px 0;
    border-top: 1px solid #b5b5b5;
    border-bottom: 1px solid #b5b5b5;
}
.grip span, .splitter span {
    width: 6px;
    height: 6px;
    border: 1px solid #999;
    border-radius: 50%;
    background: #d3d3d3;
}
.panel-tabs {
    display: flex;
    height: 26px;
    padding-left: 2px;
    border-bottom: 1px solid #b5b5b5;
}
.panel-tabs button {
    display: flex;
    align-items: center;
    justify-content: center;
    width: 40px;
    background: #d3d3d3;
    border: 1px solid #808080;
    border-left: 0;
}
.panel-tabs .active {
    background: #f7f7f7;
    border-bottom: 0;
}
.panel-tabs .next {
    margin-left: auto;
    width: 24px;
    background: none;
    border: 0;
}
.panel-tabs .next svg {
    width: 10px;
    height: 12px;
}
.filter {
    display: flex;
    align-items: center;
    height: 26px;
    margin: 0 4px 0 5px;
    padding-left: 1px;
    border: 1px solid #c0c0c0;
}
.filter svg {
    width: 19px;
    height: 19px;
}
.filter .small {
    width: 8px;
    height: 8px;
    margin-top: 5px;
}
.filter input {
    flex: 1;
    min-width: 0;
}
.tree {
    list-style: none;
    margin: 0;
    padding: 0;
    border-bottom: 3px solid #3a8cc5;
    border-left: 1px solid #c0c0c0;
    overflow: hidden;
}
.tree li {
    display: flex;
    align-items: center;
    gap: 4px;
    height: 22px;
    padding-left: 26px;
    white-space: nowrap;
}
.tree svg {
    width: 19px;
    height: 19px;
}
.tree .root {
    padding-left: 3px;
}
.tree .open {
    padding-left: 9px;
}
.tree .open::before {
    content: "";
    border: 4px solid transparent;
    border-left: 5px solid #555;
    border-right: 0;
    margin-right: 8px;
}
.tree .cap {
    width: 20px;
    height: 20px;
}
.scrollbar {
    display: flex;
    margin-top: auto;
    margin-bottom: 9px;
    height: 17px;
    background: #f0f0f0;
}
.scrollbar button {
    display: flex;
    align-items: center;
    justify-content: center;
    width: 18px;
}
.scrollbar button svg {
    width: 10px;
    height: 12px;
}
.track {
    flex: 1;
}
.thumb {
    width: 66%;
    height: 100%;
    background: #cdcdcd;
}
.splitter {
    position: absolute;
    left: 100%;
    top: 312px;
    z-index: 1;
    display: flex;
    align-items: center;
    justify-content: center;
    width: 9px;
    height: 39px;
    background: #f7f7f7;
    border: 1px solid #808080;
    border-left: 0;
}

/* graphics area */
.viewport {
    position: relative;
    grid-area: 1 / 2 / 3 / 3;
    overflow: hidden;
    background:
        linear-gradient(to bottom, rgba(255,255,255,0) 54%, rgba(255,255,255,0.6) 62%, #fff 75%),
        radial-gradient(ellipse 40% 68% at 76% 40%, #d8dde9 0%, rgba(216,221,233,0.7) 50%, rgba(216,221,233,0) 100%),
        linear-gradient(100deg, rgba(233,236,243,0) 60%, #e9ecf3 85%),
        linear-gradient(to bottom, #fff 18%, #e1e4ee 54%);
}
.model {
    width: 100%;
    height: 100%;
}
.axis {
    font-size: 10px;
}
.heads-up {
    position: absolute;
    top: 24px;
    left: 0;
    right: 4px;
    display: flex;
    justify-content: center;
    opacity: 0.85;
}
.doc-tools {
    position: absolute;
    top: 2px;
    right: 6px;
    display: flex;
    color: #999;
}
.task-pane {
    position: absolute;
    top: 76px;
    right: 0;
    width: 26px;
    border: 1px solid #808080;
    border-right: 0;
}
.task-pane button {
    display: flex;
    align-items: center;
    justify-content: center;
    width: 100%;
    height: 24px;
    background: #d3d3d3;
    border-top: 1px solid #808080;
}
.task-pane .active {
    background: #f7f7f7;
    height: 23px;
    border-top: 0;
}

/* standard views toolbar */
.views {
    grid-area: 1 / 3 / 3 / 4;
    display: flex;
    flex-direction: column;
    padding: 3px 0 0 2px;
    background: #f7f7f7;
}
.views::before {
    content: "";
    margin: 0 1px 8px 3px;
    border-top: 2px dotted #999;
}
.views-group {
    padding: 0 3px 2px;
    border-bottom: 1px solid #808080;
}
.views-group + .views-group {
    padding-top: 5px;
}
.views button {
    display: flex;
    align-items: center;
    justify-content: center;
    width: 26px;
    height: 26px;
}
.views .active {
    background: #fff;
    border: 1px solid #b5b5b5;
}
.views .last {
    padding-bottom: 7px;
}

/* sheet tabs */
.sheets {
    display: flex;
    height: 18px;
    background: #f7f7f7;
    border-top: 1px solid #808080;
    border-bottom: 2px solid #e8e8e8;
    box-shadow: inset 0 -1px 0 #808080;
}
.sheet-nav {
    display: flex;
    margin-left: 27px;
    width: 64px;
    height: 14px;
    background: #b5b5b5;
    border-top: 1px solid #222;
}
.sheet-nav button {
    display: flex;
    align-items: center;
    justify-content: center;
    width: 16px;
    border: 1px solid #999;
}
.sheet-nav svg {
    width: 10px;
    height: 10px;
}
.sheet {
    height: 14px;
    padding: 0 9px;
    background: #d3d3d3;
    border-right: 1px solid #808080;
}
.sheet.active {
    padding: 0 12px;
    background: #f7f7f7;
    font-weight: bold;
}
.sheet:last-child {
    padding: 0 16px 0 10px;
}

/* neighbouring window */
.explorer {
    width: 23px;
    overflow: hidden;
    background: #fff;
}
.explorer-title {
    height: 22px;
    padding: 2px;
}
.explorer-title svg {
    width: 14px;
    height: 16px;
}
.explorer-menu {
    height: 23px;
    padding-left: 10px;
    line-height: 23px;
    background: #0063b1;
    color: #fff;
}
.back {
    display: block;
    margin: 14px 0 0 12px;
}
.back svg {
    width: 12px;
    height: 12px;
}
```
